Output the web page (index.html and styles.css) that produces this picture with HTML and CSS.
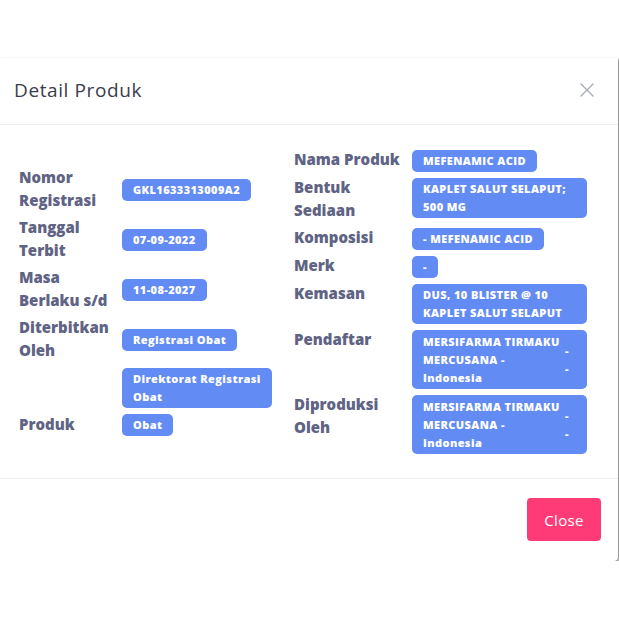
FILE: index.html
```html
<!DOCTYPE html>
<html lang="id">
<head>
<meta charset="utf-8">
<title>Detail Produk</title>
<link rel="stylesheet" href="styles.css">
</head>
<body>
<div class="modal">
  <div class="modal-header">
    <h5 class="modal-title">Detail Produk</h5>
    <button class="btn-x" aria-label="Close">
      <svg width="14" height="14" viewBox="0 0 14 14"><path d="M1 1L13 13M13 1L1 13" stroke="#a9abb6" stroke-width="1.4" fill="none" stroke-linecap="round"/></svg>
    </button>
  </div>
  <div class="modal-body">
    <div class="col col-left">
      <table class="info info-left">
        <tr><td class="lbl">Nomor<br>Registrasi</td><td class="val"><span class="badge">GKL1633313009A2</span></td></tr>
        <tr><td class="lbl">Tanggal<br>Terbit</td><td class="val"><span class="badge">07-09-2022</span></td></tr>
        <tr><td class="lbl">Masa<br>Berlaku s/d</td><td class="val"><span class="badge">11-08-2027</span></td></tr>
        <tr><td class="lbl">Diterbitkan<br>Oleh</td><td class="val"><span class="badge">Registrasi Obat</span></td></tr>
        <tr><td class="lbl"></td><td class="val"><span class="badge">Direktorat Registrasi<br>Obat</span></td></tr>
        <tr><td class="lbl">Produk</td><td class="val"><span class="badge">Obat</span></td></tr>
      </table>
    </div>
    <div class="col col-right">
      <table class="info info-right">
        <tr><td class="lbl">Nama Produk</td><td class="val"><span class="badge">MEFENAMIC ACID</span></td></tr>
        <tr><td class="lbl">Bentuk<br>Sediaan</td><td class="val"><span class="badge badge-wide">KAPLET SALUT SELAPUT;<br>500 MG</span></td></tr>
        <tr><td class="lbl">Komposisi</td><td class="val"><span class="badge">- MEFENAMIC ACID</span></td></tr>
        <tr><td class="lbl">Merk</td><td class="val"><span class="badge">-</span></td></tr>
        <tr><td class="lbl">Kemasan</td><td class="val"><span class="badge badge-wide">DUS, 10 BLISTER @ 10<br>KAPLET SALUT SELAPUT</span></td></tr>
        <tr><td class="lbl">Pendaftar</td><td class="val"><span class="badge badge-split"><span class="b-main">MERSIFARMA TIRMAKU<br>MERCUSANA -<br>Indonesia</span><span class="b-side">-<br>-</span></span></td></tr>
        <tr><td class="lbl">Diproduksi<br>Oleh</td><td class="val"><span class="badge badge-split"><span class="b-main">MERSIFARMA TIRMAKU<br>MERCUSANA -<br>Indonesia</span><span class="b-side">-<br>-</span></span></td></tr>
      </table>
    </div>
  </div>
  <div class="modal-footer">
    <button class="btn-close">Close</button>
  </div>
</div>
</body>
</html>
```
FILE: styles.css
```css
* { box-sizing: border-box; }
html, body { margin: 0; padding: 0; background: #ffffff; }
body { font-family: "Open Sans", "Noto Sans", sans-serif; }

.modal {
  margin-top: 58px;
  width: 618px;
  background: #ffffff;
  box-shadow: 1px 1px 2px rgba(0, 0, 0, 0.55);
  border-radius: 0 0 4px 0;
}

.modal-header {
  display: flex;
  align-items: center;
  justify-content: space-between;
  height: 67px;
  padding: 0 24px 2px 14px;
  border-bottom: 1px solid #eceef2;
}
.modal-title {
  margin: 0;
  font-size: 19px;
  font-weight: 500;
  color: #3a3c4c;
  letter-spacing: 0.6px;
}
.btn-x {
  border: 0;
  background: none;
  padding: 0;
  width: 14px;
  height: 14px;
  display: flex;
}

.modal-body {
  display: flex;
  align-items: center;
  padding: 21px 19px 22px 19px;
}
.col-left { width: 275px; }
.col-right { flex: 1; }

.info { border-collapse: collapse; }
.info td { padding: 2px 0; }
.lbl {
  font-size: 15px;
  font-weight: 800;
  line-height: 23px;
  color: #5f6384;
  letter-spacing: 0;
  white-space: nowrap;
}
.info-left .lbl { width: 103px; vertical-align: middle; }
.info-left .val { vertical-align: middle; width: 156px; }
.info-right .lbl { width: 118px; vertical-align: top; }
.info-right .val { vertical-align: top; width: 175px; }

.badge {
  display: block;
  width: fit-content;
  max-width: 100%;
  margin-top: 2px;
  padding: 2px 11px;
  background: #628bf4;
  color: #ffffff;
  border-radius: 5px;
  font-size: 11px;
  font-weight: 800;
  line-height: 18px;
  letter-spacing: 0.4px;
  white-space: nowrap;
}
.badge-wide { width: 100%; }
.badge-split {
  display: flex;
  align-items: center;
  width: 100%;
  padding-top: 2.5px;
  padding-bottom: 2.5px;
}
.b-main { flex: 1; }
.b-side { width: 16px; text-align: center; padding-right: 2px; }

.modal-footer {
  display: flex;
  justify-content: flex-end;
  padding: 19px 17px 20px 0;
  border-top: 1px solid #eceef2;
}
.btn-close {
  width: 74px;
  height: 43px;
  border: 0;
  border-radius: 4px;
  background: #ff3b77;
  color: #ffffff;
  font-family: "Open Sans", "Noto Sans", sans-serif;
  font-size: 15px;
  font-weight: 400;
  letter-spacing: 0.3px;
}
```
